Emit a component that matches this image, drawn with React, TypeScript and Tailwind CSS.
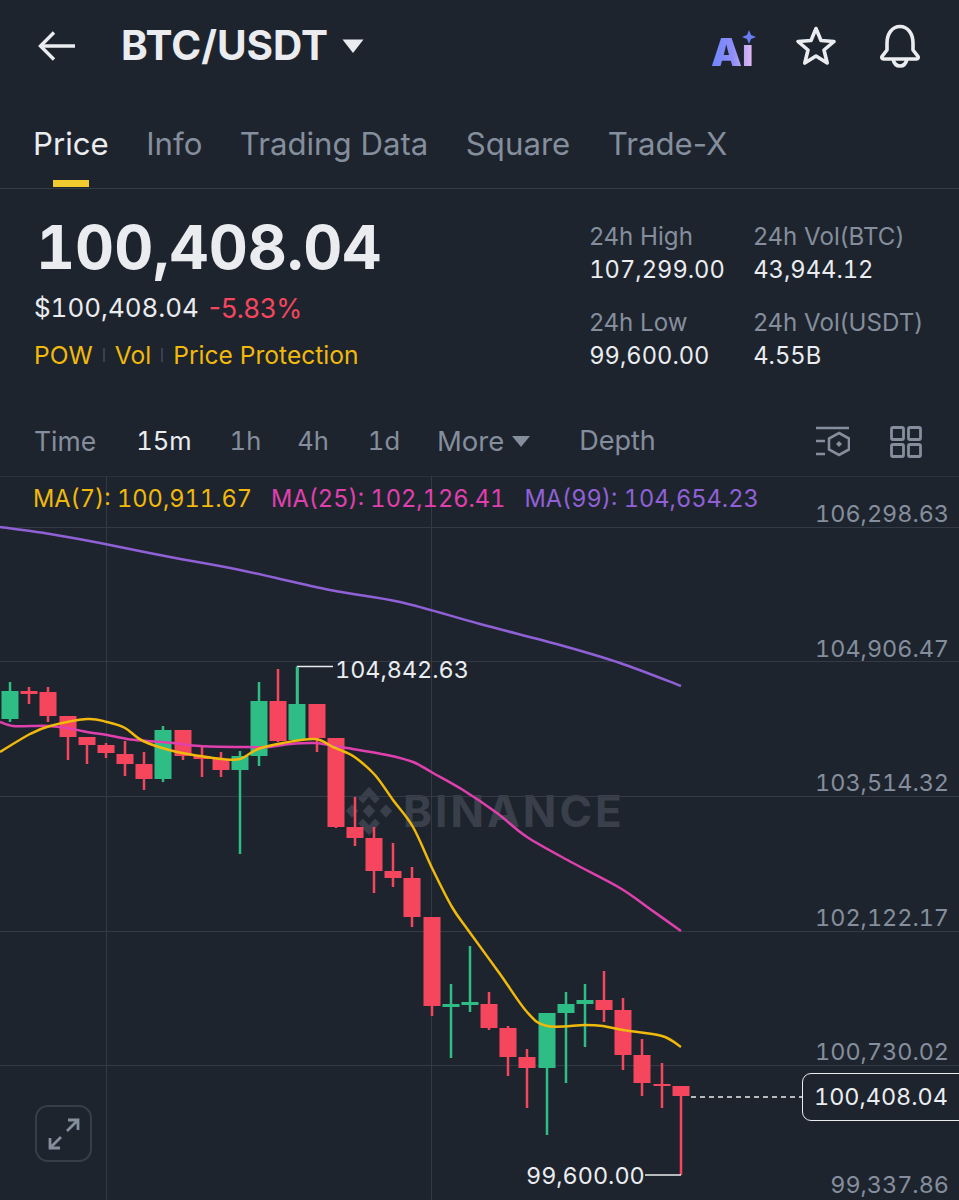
import React from "react";

type C = [number, number, number, number, number, "r" | "g"];
const candles: C[] = [
  [10,682,722,691,719,"g"],[29,687,704,691,694,"r"],[48,687,722,692,716,"r"],[68,716,760,716,737,"r"],
  [87,737,764,737,745,"r"],[106,743,758,745,753,"r"],[125,741,776,754,764,"r"],[144,752,790,764,779,"r"],
  [163,726,782,730,779,"g"],[183,730,760,730,756,"r"],[202,747,777,756,759,"r"],[221,752,777,759,770,"r"],
  [240,751,854,756,770,"g"],[259,682,766,701,756,"g"],[278,669,742,701,741,"r"],[297,667,740,704,740,"g"],
  [317,704,752,704,738,"r"],[336,738,828,738,827,"r"],[355,797,846,827,838,"r"],[374,827,893,838,871,"r"],
  [393,843,887,871,878,"r"],[412,867,927,878,917,"r"],[432,917,1016,917,1006,"r"],[451,984,1058,1004,1007,"g"],
  [470,946,1012,1002,1005,"g"],[489,992,1030,1004,1028,"r"],[508,1026,1076,1028,1057,"r"],[527,1049,1108,1057,1068,"r"],
  [547,1013,1135,1013,1068,"g"],[566,992,1083,1004,1013,"g"],[585,984,1047,1000,1004,"g"],[604,971,1022,1000,1010,"r"],
  [623,998,1070,1010,1055,"r"],[642,1039,1096,1055,1083,"r"],[662,1063,1108,1084,1086,"r"],[681,1086,1175,1086,1096,"r"],
];
const yellow: number[][] = [[0,752],[30,734],[50,726],[87,719],[107,722],[125,728],[143,741],[173,751],[200,756],[222,759],[240,759],[258,749],[283,743],[315,739],[333,747],[345,752],[356,758],[375,775],[393,800],[413,827],[433,870],[452,907],[468,930],[500,974],[527,1012],[547,1026],[585,1025],[603,1026],[623,1030],[662,1036],[681,1047]];
const pink: number[][] = [[0,722],[13,726],[30,726],[48,726],[67,728],[87,732],[107,735],[127,739],[147,741],[173,743],[200,746],[240,747],[267,747],[290,744],[315,743],[333,746],[347,748],[387,755],[413,762],[433,773],[463,790],[497,813],[527,837],[573,863],[620,888],[650,909],[681,931]];
const purple: number[][] = [[0,527],[50,534],[100,543],[170,557],[240,570],[330,590],[400,602],[480,624],[560,645],[620,663],[681,686]];

function smooth(p: number[][]) {
  let d = `M${p[0][0]} ${p[0][1]}`;
  for (let i = 0; i < p.length - 1; i++) {
    const a = p[Math.max(i - 1, 0)], b = p[i], c = p[i + 1], e = p[Math.min(i + 2, p.length - 1)];
    d += `C${b[0] + (c[0] - a[0]) / 6} ${b[1] + (c[1] - a[1]) / 6} ${c[0] - (e[0] - b[0]) / 6} ${c[1] - (e[1] - b[1]) / 6} ${c[0]} ${c[1]}`;
  }
  return d;
}

const axis = [
  ["106,298.63", "top-[23px]"],
  ["104,906.47", "top-[158px]"],
  ["103,514.32", "top-[292px]"],
  ["102,122.17", "top-[427px]"],
  ["100,730.02", "top-[561px]"],
  ["99,337.86", "top-[694px]"],
];

function Stat({ label, value }: { label: string; value: string }) {
  return (
    <div className="flex flex-col">
      <span className="text-[24.100px] leading-[33px] text-[#848e9c]">{label}</span>
      <span className="text-[23.700px] leading-[33px] tabular-nums text-[#eaecef]">{value}</span>
    </div>
  );
}

export default function App() {
  return (
    <div
      className="h-[1200px] w-[959px] overflow-hidden bg-[#1e242e] text-[#eaecef]"
      style={{ fontFamily: 'Inter, "Liberation Sans", sans-serif' }}
    >
      {/* Header */}
      <div className="flex h-[92px] items-center pl-[38px] pr-[38px]">
        <svg width="40" height="32" viewBox="0 0 40 32" fill="none" stroke="#eaecef" strokeWidth="3.4">
          <path d="M37 16H3" />
          <path d="M16 2.5 2.5 16 16 29.5" />
        </svg>
        <span className="ml-[43px] text-[40.500px] font-bold leading-none">BTC/USDT</span>
        <svg className="ml-[14px]" width="22" height="14" viewBox="0 0 22 14">
          <path d="M0.5 0.5h21L11 14z" fill="#eaecef" />
        </svg>
        <div className="ml-auto flex items-center">
          <div className="relative mr-[38px] mt-[6px] h-[44px] w-[46px]">
            <span className="absolute left-0 top-[3px] bg-gradient-to-r from-[#6f86ff] via-[#8d8df8] to-[#e9bdf0] bg-clip-text text-[39px] font-black leading-[44px] text-transparent">
              Ai
            </span>
            <svg className="absolute right-[0px] top-[2px]" width="16" height="16" viewBox="0 0 16 16">
              <rect x="0" y="0" width="16" height="16" fill="#1e242e" />
              <path d="M8 1 10 6 15 8 10 10 8 15 6 10 1 8 6 6z" fill="#6a7df5" />
            </svg>
          </div>
          <svg className="mr-[42px]" width="42" height="42" viewBox="0 0 42 42" fill="none" stroke="#eaecef" strokeWidth="3.6" strokeLinejoin="round">
            <path d="M21 3.5 26 15.5 39 16.5 29 25 32.2 38 21 31 9.8 38 13 25 3 16.5 16 15.5z" />
          </svg>
          <svg width="42" height="46" viewBox="0 0 42 46" fill="none" stroke="#eaecef" strokeWidth="3.6" strokeLinejoin="round">
            <path d="M8 20c0-9 5-16.500 13-16.500S34 11 34 20v7l5 6.500c.7 1.200 0 2.500-1.500 2.500h-33C3 36 2.300 34.700 3 33.500L8 27z" />
            <path d="M14 36c1 4.500 4 7 7 7s6-2.500 7-7" />
          </svg>
        </div>
      </div>

      {/* Tabs */}
      <div className="flex h-[97px] gap-[37.500px] border-b border-[#333b47] pl-[33px] pt-[30px] text-[31.200px] leading-[44px] text-[#848e9c]">
        <div className="flex flex-col items-center">
          <span className="text-[#eaecef]">Price</span>
          <span className="mt-[14px] h-[7px] w-[36px] bg-[#f0ca2f]" />
        </div>
        <span>Info</span>
        <span>Trading Data</span>
        <span>Square</span>
        <span>Trade-X</span>
      </div>

      {/* Price section */}
      <div className="flex h-[224px] items-start justify-between pl-[34px]">
        <div className="flex flex-col">
          <span className="ml-[2px] mt-[20px] text-[60.500px] font-bold leading-[76px] tabular-nums">100,408.04</span>
          <div className="mt-[5px] flex gap-[10px] text-[25.900px] leading-[36px]">
            <span className="tabular-nums">$100,408.04</span>
            <span className="text-[26.500px] text-[#f6465d]">-5.83%</span>
          </div>
          <div className="mt-[11px] flex items-center text-[24.600px] leading-[36px] text-[#f0b90b]">
            <span>POW</span>
            <span className="mx-[10px] h-[14px] w-[2px] bg-[#3a414d]" />
            <span>Vol</span>
            <span className="mx-[10px] h-[14px] w-[2px] bg-[#3a414d]" />
            <span>Price Protection</span>
          </div>
        </div>
        <div className="mr-[36px] mt-[31px] grid grid-cols-[164px_auto] gap-y-[20px]">
          <Stat label="24h High" value="107,299.00" />
          <Stat label="24h Vol(BTC)" value="43,944.12" />
          <Stat label="24h Low" value="99,600.00" />
          <Stat label="24h Vol(USDT)" value="4.55B" />
        </div>
      </div>

      {/* Time row */}
      <div className="flex h-[63px] items-center pb-[6px] pl-[34px] pr-[37px] text-[26.500px] text-[#848e9c]">
        <span>Time</span>
        <span className="ml-[40px] text-[25.500px] tabular-nums text-[#eaecef]">15m</span>
        <span className="ml-[38px] text-[25.500px] tabular-nums">1h</span>
        <span className="ml-[36px] text-[25.500px] tabular-nums">4h</span>
        <span className="ml-[39px] text-[25.500px] tabular-nums">1d</span>
        <span className="ml-[37px] text-[27.500px]">More</span>
        <svg className="ml-[8px]" width="18" height="11" viewBox="0 0 18 11">
          <path d="M0 0h18L9 11z" fill="#848e9c" />
        </svg>
        <span className="ml-[49px] text-[27px]">Depth</span>
        <div className="ml-auto flex items-center gap-[40px]">
          <svg width="34" height="34" viewBox="0 0 34 34" fill="none" stroke="#848e9c" strokeWidth="2.600">
            <path d="M0 3h33M0 16h9M0 29h9" />
            <path d="M23 8l10 5.500v11L23 30l-10-5.500v-11z" />
            <path d="M23 16l3 3-3 3-3-3z" fill="#848e9c" stroke="none" />
          </svg>
          <svg width="32" height="32" viewBox="0 0 32 32" fill="none" stroke="#848e9c" strokeWidth="2.800">
            <rect x="1.500" y="1.500" width="12" height="12" rx="1.500" />
            <rect x="18.500" y="1.500" width="12" height="12" rx="1.500" />
            <rect x="1.500" y="18.500" width="12" height="12" rx="1.500" />
            <rect x="18.500" y="18.500" width="12" height="12" rx="1.500" />
          </svg>
        </div>
      </div>

      {/* Chart */}
      <div className="relative h-[724px]">
        <div className="absolute inset-x-0 top-0 h-px bg-[#2b313b]" />
        {/* watermark */}
        <div className="absolute left-[345px] top-[309px] flex items-center text-[#3a404b]">
          <svg width="48" height="52" viewBox="0 0 62 62" preserveAspectRatio="none" fill="#3a404b">
            <path d="M31 2 45 16 39 22 31 14 23 22 17 16z" />
            <path d="M31 60 45 46 39 40 31 48 23 40 17 46z" />
            <path d="M9 23 17 31 9 39 1 31z" />
            <path d="M53 23 61 31 53 39 45 31z" />
            <path d="M31 23 39 31 31 39 23 31z" />
          </svg>
          <span className="ml-[10px] text-[44px] font-bold leading-none tracking-[3px]">BINANCE</span>
        </div>

        <svg className="absolute inset-0" width="959" height="724" viewBox="0 476 959 724" fill="none">
          {[527, 661, 796, 931, 1065].map((y) => (
            <line key={y} x1="0" x2="959" y1={y + 0.5} y2={y + 0.5} stroke="#333a45" strokeWidth="1" />
          ))}
          {[106, 431].map((x) => (
            <line key={x} x1={x + 0.5} x2={x + 0.5} y1="476" y2="1200" stroke="#333a45" strokeWidth="1" />
          ))}
          {candles.map(([x, wt, wb, bt, bb, c], i) => {
            const col = c === "g" ? "#2ebd85" : "#f6465d";
            return (
              <g key={i} fill={col}>
                <rect x={x - 1.25} y={wt} width="2.5" height={wb - wt} />
                <rect x={x - 8.500} y={bt} width="17" height={bb - bt} />
              </g>
            );
          })}
          <path d={smooth(purple)} stroke="#9061d6" strokeWidth="2.500" />
          <path d={smooth(pink)} stroke="#e040ae" strokeWidth="2.500" />
          <path d={smooth(yellow)} stroke="#f0b90b" strokeWidth="2.500" />
          <path d="M297.500 704V666.500H333" stroke="#eaecef" strokeWidth="1.500" />
          <path d="M297.500 704V667" stroke="#2ebd85" strokeWidth="2.500" />
          <path d="M645 1175H681" stroke="#eaecef" strokeWidth="1.500" />
          <path d="M691 1097H802" stroke="#eaecef" strokeWidth="1.500" strokeDasharray="5 4" />
        </svg>

        {/* MA legend */}
        <div className="absolute left-[33px] top-[5px] flex gap-[19px] text-[23.600px] leading-[36px] tabular-nums">
          <span className="text-[#f0b90b]">MA(7): 100,911.67</span>
          <span className="text-[#e040ae]">MA(25): 102,126.41</span>
          <span className="text-[#9061d6]">MA(99): 104,654.23</span>
        </div>

        {axis.map(([t, top]) => (
          <span key={t} className={`absolute right-[10px] ${top} text-[23.400px] leading-[30px] tabular-nums text-[#848e9c]`}>
            {t}
          </span>
        ))}

        <span className="absolute left-[335px] top-[177px] text-[23.400px] leading-[34px] tabular-nums text-[#eaecef]">104,842.63</span>
        <span className="absolute left-[526px] top-[683px] text-[23.400px] leading-[34px] tabular-nums text-[#eaecef]">99,600.00</span>

        <div className="absolute left-[802px] top-[597px] flex h-[48px] w-[170px] items-center rounded-[9px] border border-[#eaecef] bg-[#1e242e] pl-[11px] text-[23.400px] tabular-nums text-[#eaecef]">
          100,408.04
        </div>

        <div className="absolute left-[35px] top-[629px] flex h-[57px] w-[57px] items-center justify-center rounded-[13px] border-2 border-[#373e4a]">
          <svg width="34" height="34" viewBox="0 0 34 34" fill="none" stroke="#848e9c" strokeWidth="2.800">
            <path d="M20 14 31 3M21 3h10v10" />
            <path d="M14 20 3 31M13 31H3V21" />
          </svg>
        </div>
      </div>
    </div>
  );
}
